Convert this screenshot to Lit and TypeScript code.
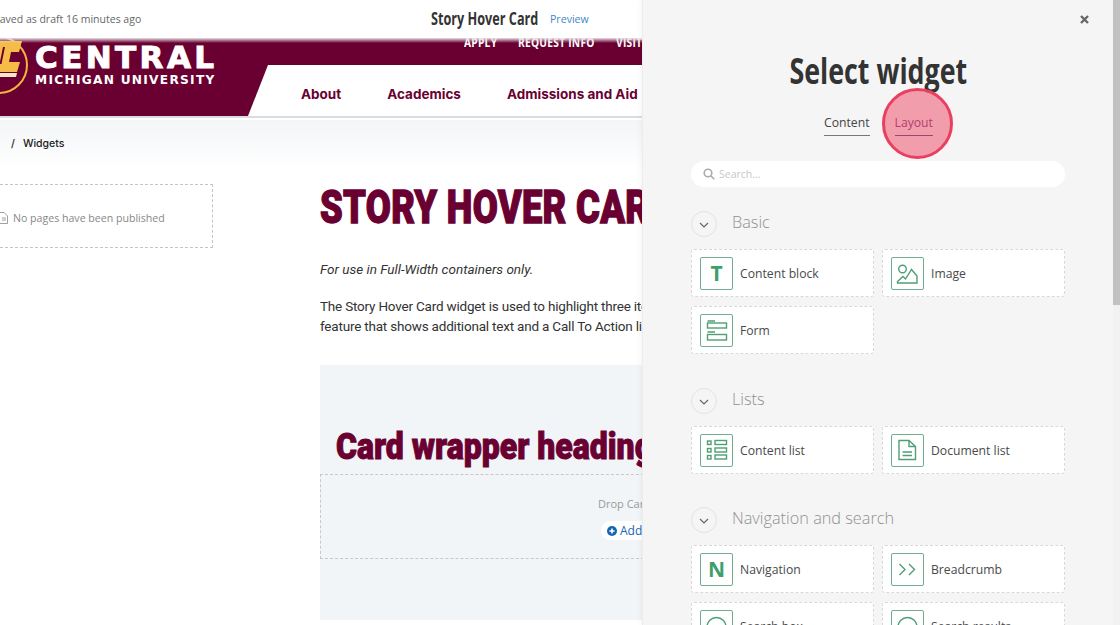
import { LitElement, html, css, svg } from "lit";
import { customElement } from "lit/decorators.js";

const icons: Record<string, unknown> = {
  T: html`<span class="glyph">T</span>`,
  N: html`<span class="glyph">N</span>`,
  image: svg`<circle cx="10.5" cy="11" r="3.8"/><path d="M5.5 25 V23.5 L11 18.5 L13.5 21 L19.5 11.5 L25 18 V25 Z"/>`,
  form: svg`<path d="M6.5 6 H14 M6.5 17 H14"/><rect x="6.5" y="8" width="19" height="5"/><rect x="6.5" y="19.5" width="19" height="5.5"/>`,
  list: svg`<rect x="6.5" y="6" width="3.5" height="3.5"/><rect x="14" y="5.5" width="11.5" height="4"/><rect x="6.5" y="13.5" width="3.5" height="3.5"/><rect x="14" y="13" width="11.5" height="4"/><rect x="6.5" y="20.5" width="3.5" height="3.5"/><rect x="14" y="20" width="11.5" height="4"/>`,
  doc: svg`<path d="M7 5.5 H17 L23.5 11.5 V24.5 H7 Z M17 5.5 V11.5 H23.5 M10.5 17 H20 M10.5 20.5 H20"/>`,
  crumb: svg`<path d="M7.5 10 L13 15.5 L7.5 21 M17 10 L22.5 15.5 L17 21"/>`,
  search: svg`<circle cx="15.5" cy="16" r="9.5"/><path d="M22.5 23 L27 27.5"/>`,
};

const sections = [
  { title: "Basic", items: [["T", "Content block"], ["image", "Image"], ["form", "Form"]] },
  { title: "Lists", items: [["list", "Content list"], ["doc", "Document list"]] },
  { title: "Navigation and search", items: [["N", "Navigation"], ["crumb", "Breadcrumb"], ["search", "Search box"], ["search", "Search results"]] },
];

@customElement("app-root")
export class AppRoot extends LitElement {
  static styles = css`
    :host { display: block; width: 1120px; height: 625px; overflow: hidden; position: relative; background: #fff; font-family: "Open Sans", sans-serif; }
    * { box-sizing: border-box; }
    .root { display: flex; height: 625px; }
    .page { width: 642px; flex: none; overflow: hidden; display: flex; flex-direction: column; }

    .topbar { height: 38px; flex: none; display: flex; align-items: center; position: relative; background: #fff; }
    .saved { margin-left: -6px; width: 437px; flex: none; font-size: 10.5px; color: #666; padding-bottom: 1px; white-space: nowrap; }
    .doc-title { font-weight: 700; font-size: 17px; color: #333; width: 119px; flex: none; white-space: nowrap; transform: scaleX(.745); transform-origin: left center; padding-bottom: 2px; }
    .preview { font-size: 10.6px; color: #3f88c5; padding-bottom: 1px; }

    .masthead { height: 78px; flex: none; background: #6a0032; display: flex; position: relative; overflow: hidden; }
    .masthead::after { content: ""; position: absolute; left: 0; right: 0; top: 0; height: 5px; background: linear-gradient(#e8dfe3, rgba(106,0,50,0)); }
    .logo { width: 248px; flex: none; display: flex; }
    .logo svg { width: 30px; height: 56px; flex: none; }
    .logo-text { margin-left: 5px; color: #fff; display: flex; flex-direction: column; font-family: "DejaVu Sans", sans-serif; font-weight: 700; white-space: nowrap; }
    .central { font-size: 31px; line-height: 33px; letter-spacing: 3.4px; margin-top: 3px; -webkit-text-stroke: 1px #fff; }
    .michigan { font-size: 12.2px; line-height: 14px; letter-spacing: 1.27px; margin-top: -1px; }
    .mast-right { flex: 1; display: flex; flex-direction: column; }
    .util { height: 27px; flex: none; padding-left: 216px; display: flex; gap: 21px; color: #fff; font-weight: 700; font-size: 12px; line-height: 10px; white-space: nowrap; }
    .util span { flex: none; transform: scaleX(.85); transform-origin: left top; width: 33px; letter-spacing: .3px; }
    .util span:nth-child(2) { width: 77px; }
    .nav { flex: 1; background: #fff; clip-path: polygon(20px 0, 100% 0, 100% 100%, 0 100%); display: flex; align-items: center; padding-left: 53px; gap: 46px; font-family: Inter, sans-serif; font-weight: 700; font-size: 13.5px; color: #6a0032; white-space: nowrap; padding-top: 6px; }
    .shadow { height: 2px; flex: none; background: #dcdcdc; }

    .crumbs { height: 50px; flex: none; margin-top: 2px; background: linear-gradient(#f3f5f7, #fff); display: flex; align-items: center; padding: 0 0 3px 11px; gap: 8px; font-family: Inter, sans-serif; font-size: 10.5px; font-weight: 500; color: #222; }
    .body { flex: 1; display: flex; min-height: 0; }
    .side { width: 320px; flex: none; padding-top: 14px; }
    .nopages { width: 213px; height: 64px; border: 1px dashed #c4c4c4; border-left: 0; display: flex; align-items: center; padding-top: 3px; gap: 5px; font-size: 10.6px; color: #888; }
    .nopages svg { width: 8px; height: 12px; flex: none; }
    .main { flex: 1; min-width: 0; }
    h1 { margin: 9px 0 0; font-family: Roboto, sans-serif; font-weight: 900; font-size: 47px; line-height: 56px; color: #6a0032; white-space: nowrap; transform: scaleX(.773); transform-origin: left center; width: 440px; letter-spacing: .4px; -webkit-text-stroke: 1.4px #6a0032; }
    .note, .para { font-family: Roboto, sans-serif; font-size: 13.5px; color: #333; white-space: nowrap; line-height: 20px; }
    .note { font-style: italic; margin: 24px 0 0; }
    .para { margin: 17px 0 0; letter-spacing: -.2px; }
    .wrapper { width: 640px; height: 255px; margin-top: 29px; background: #f2f5f7; display: flex; flex-direction: column; }
    h2 { margin: 0; padding: 50px 0 0 18.5px; height: 109px; font-family: Roboto, sans-serif; font-weight: 900; font-size: 37px; line-height: 64px; color: #6a0032; white-space: nowrap; transform: scaleX(.865); transform-origin: left center; width: 440px; -webkit-text-stroke: 1px #6a0032; }
    .drop { height: 85px; border: 1px dashed #c8c8c8; border-right: 0; padding: 21px 0 0 277px; font-size: 11px; color: #999; white-space: nowrap; line-height: 15px; }
    .add { display: inline-flex; align-items: center; gap: 3px; margin: 10px 0 0 3px; height: 19px; padding: 0 30px 0 6px; background: #fff; border-radius: 10px; font-size: 12px; color: #1565b0; }
    .add svg { width: 10px; height: 10px; }

    .panel { flex: 1; display: flex; background: #f5f5f5; border-left: 1px solid #ececec; box-shadow: -2px 0 4px rgba(0,0,0,.04); position: relative; min-width: 0; }
    .panel-main { width: 470px; flex: none; padding: 0 48px; display: flex; flex-direction: column; overflow: hidden; }
    .closebar { height: 30px; flex: none; display: flex; justify-content: flex-end; padding: 15px 0 0; margin-right: -24px; }
    .closebar svg { width: 9px; height: 9px; }
    .select { flex: none; margin: 17px auto 0; height: 47px; font-weight: 700; font-size: 36px; line-height: 47px; color: #333; white-space: nowrap; transform: scaleX(.745); }
    .tabs { display: flex; justify-content: center; gap: 25px; margin: 16px 0 0; flex: none; font-size: 12.2px; padding-left: 1px; }
    .tab { height: 26px; line-height: 25px; color: #444; border-bottom: 1.5px solid #777; }
    .tab.purple { color: #7a4a86; border-bottom-color: #6b4a8f; }
    .searchbox { flex: none; height: 26px; width: 374px; margin-top: 25px; border-radius: 13px; background: #fff; display: flex; align-items: center; padding-left: 12px; gap: 4px; font-size: 10.5px; color: #c8c8c8; }
    .searchbox svg { width: 12px; height: 12px; }
    .sec-head { display: flex; align-items: center; gap: 15px; height: 26px; flex: none; margin-bottom: 12px; font-weight: 300; font-size: 16.3px; color: #909090; }
    .sec-head span { padding-bottom: 4px; }
    .chev { width: 26px; height: 26px; border: 1px solid #e2e2e2; border-radius: 50%; display: flex; align-items: center; justify-content: center; }
    .chev svg { width: 10px; height: 6px; margin-top: 1px; }
    .section { flex: none; margin-top: 24px; }
    .section + .section { margin-top: 34px; }
    .section:last-child { margin-top: 33px; }
    .grid { display: grid; grid-template-columns: 183px 183px; gap: 9px 8px; width: 374px; }
    .card { height: 48px; background: #fff; border: 1px dashed #d8d8d8; border-radius: 3px; display: flex; align-items: center; padding-left: 8px; gap: 7px; font-size: 12.2px; color: #4a4a4a; }
    .ic { width: 33px; height: 33px; flex: none; border: 1px solid #72ad8f; border-radius: 2px; display: flex; align-items: center; justify-content: center; overflow: hidden; }
    .ic svg { width: 31px; height: 31px; fill: none; stroke: #4f9e74; stroke-width: 1.4; }
    .glyph { font-weight: 700; font-size: 21px; line-height: 31px; color: #3f9f6c; }
    .track { width: 7px; flex: none; background: #f1f1f1; }
    .thumb { height: 305px; background: #c1c1c1; }

    .pulse { position: absolute; left: 882px; top: 88px; width: 71px; height: 71px; border-radius: 50%; background: rgba(240, 50, 85, .45); border: 3px solid #e9405f; pointer-events: none; }
  `;

  render() {
    return html`
      <div class="root">
        <div class="page">
          <div class="topbar">
            <span class="saved">Saved as draft 16 minutes ago</span>
            <span class="doc-title">Story Hover Card</span>
            <span class="preview">Preview</span>
          </div>
          <div class="masthead">
            <div class="logo">
              <svg viewBox="0 0 30 56">
                <circle cx="-1" cy="27" r="28" fill="none" stroke="#f2b43c" stroke-width="2"/>
                <path d="M-2 3 H22 L19 14 H11 L9 24 H20 L17 34 H-2 Z" fill="#f5bd47"/>
                <path d="M3 9 H5 L1.5 26 H-.5 Z" fill="#6a0032"/>
                <path d="M-2 35 H17 L16 39 H-2 Z" fill="#f7e7c8"/>
              </svg>
              <div class="logo-text">
                <span class="central">CENTRAL</span>
                <span class="michigan">MICHIGAN UNIVERSITY</span>
              </div>
            </div>
            <div class="mast-right">
              <div class="util"><span>APPLY</span><span>REQUEST INFO</span><span>VISIT</span></div>
              <div class="nav"><span>About</span><span>Academics</span><span>Admissions and Aid</span></div>
            </div>
          </div>
          <div class="shadow"></div>
          <div class="crumbs"><span>/</span><span>Widgets</span></div>
          <div class="body">
            <div class="side">
              <div class="nopages">
                <svg viewBox="0 0 8 12" fill="none" stroke="#888" stroke-width=".8"><path d="M-3 .5 H4 L7.5 4 V11.5 H-3 Z M2 6 H6 M2 8 H6"/></svg>
                <span>No pages have been published</span>
              </div>
            </div>
            <div class="main">
              <h1>STORY HOVER CARD</h1>
              <p class="note">For use in Full-Width containers only.</p>
              <p class="para">The Story Hover Card widget is used to highlight three items<br>feature that shows additional text and a Call To Action link</p>
              <div class="wrapper">
                <h2>Card wrapper heading</h2>
                <div class="drop">
                  <div>Drop Cards here</div>
                  <div class="add">
                    <svg viewBox="0 0 10 10"><circle cx="5" cy="5" r="5" fill="#1565b0"/><path d="M5 2.4 V7.6 M2.4 5 H7.6" stroke="#fff" stroke-width="1.6"/></svg>
                    Add
                  </div>
                </div>
              </div>
            </div>
          </div>
        </div>
        <div class="panel">
          <div class="panel-main">
            <div class="closebar">
              <svg viewBox="0 0 9 9"><path d="M1 1 L8 8 M8 1 L1 8" stroke="#666" stroke-width="2.4"/></svg>
            </div>
            <div class="select">Select widget</div>
            <div class="tabs"><div class="tab">Content</div><div class="tab purple">Layout</div></div>
            <div class="searchbox">
              <svg viewBox="0 0 12 12" fill="none" stroke="#aaa" stroke-width="1.6"><circle cx="5" cy="5" r="3.8"/><path d="M8 8 L11.3 11.3"/></svg>
              <span>Search...</span>
            </div>
            ${sections.map(
              (s) => html`
                <div class="section">
                  <div class="sec-head">
                    <div class="chev"><svg viewBox="0 0 10 6" fill="none" stroke="#666" stroke-width="1.2"><path d="M1 1 L5 5 L9 1"/></svg></div>
                    <span>${s.title}</span>
                  </div>
                  <div class="grid">
                    ${s.items.map(
                      ([ic, label]) => html`
                        <div class="card">
                          <div class="ic">${ic === "T" || ic === "N" ? icons[ic] : html`<svg viewBox="0 0 31 31">${icons[ic]}</svg>`}</div>
                          <span>${label}</span>
                        </div>
                      `
                    )}
                  </div>
                </div>
              `
            )}
          </div>
          <div class="track"><div class="thumb"></div></div>
        </div>
      </div>
      <div class="pulse"></div>
    `;
  }
}
